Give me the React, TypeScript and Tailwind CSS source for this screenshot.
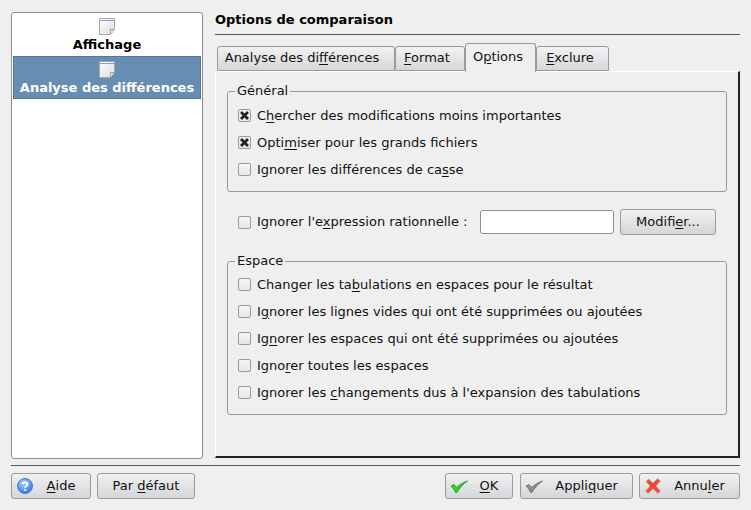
import React from "react";

// one underlined mnemonic letter, as in the KDE labels
const Label = ({ before, mn, after }: { before?: string; mn: string; after?: string }) => (
  <span className="whitespace-pre">
    {before}
    <u className="underline underline-offset-2">{mn}</u>
    {after}
  </span>
);

const PageIcon = () => (
  <svg width="16" height="17" viewBox="0 0 16 17" className="block">
    <defs>
      <linearGradient id="pg" x1="0" y1="0" x2="1" y2="1">
        <stop offset="0" stopColor="#ffffff" />
        <stop offset="1" stopColor="#dcdcdc" />
      </linearGradient>
    </defs>
    <path d="M0.5 0.5H15.5V11.5L11.5 16.5H0.5Z" fill="url(#pg)" stroke="#a8a8a8" />
    <path d="M1 2.5H15" stroke="#7f9df0" />
    <path d="M15 11.5H11.5V16" fill="#e8e8e8" stroke="#a0a0a0" />
  </svg>
);

const Check = ({ checked }: { checked?: boolean }) => (
  <span className="flex h-[13px] w-[13px] shrink-0 items-center justify-center rounded-[2px] border border-[#9a9a9a] bg-gradient-to-b from-[#f6f6f6] to-[#e6e6e6]">
    {checked && (
      <svg width="11" height="11" viewBox="0 0 11 11">
        <path d="M2 2L9 9M9 2L2 9" stroke="#222" strokeWidth="2.8" />
      </svg>
    )}
  </span>
);

const Row = ({ checked, children }: { checked?: boolean; children: React.ReactNode }) => (
  <div className="flex h-[27px] items-center gap-[6px]">
    <Check checked={checked} />
    {children}
  </div>
);

const Tab = ({ active, w, pad, children }: { active?: boolean; w: string; pad?: string; children: React.ReactNode }) =>
  active ? (
    <div className={`${w} ${pad} relative z-10 -mb-px flex h-[29px] items-start justify-center rounded-t-[3px] border border-b-0 border-[#9a9a9a] bg-[#efefef] pt-[5px]`}>
      {children}
    </div>
  ) : (
    <div className={`${w} ${pad} flex h-[25px] items-center justify-center rounded-t-[3px] border border-[#9a9a9a] bg-gradient-to-b from-[#f2f2f2] to-[#d6d7da] pb-[2px]`}>
      {children}
    </div>
  );

const Btn = ({ w, icon, children }: { w: string; icon?: React.ReactNode; children: React.ReactNode }) => (
  <button className={`${w} relative flex h-[26px] items-center justify-center rounded-[3px] border border-[#9a9a9a] bg-gradient-to-b from-[#f1f1f1] to-[#d5d6da] text-[13px] text-[#111]`}>
    {icon && <span className="absolute left-[4px] top-[3px]">{icon}</span>}
    {children}
  </button>
);

const HelpIcon = () => (
  <svg width="18" height="18" viewBox="0 0 18 18" className="block">
    <defs>
      <radialGradient id="hb" cx="0.4" cy="0.3" r="0.8">
        <stop offset="0" stopColor="#a9cdfb" />
        <stop offset="1" stopColor="#2b6fe0" />
      </radialGradient>
    </defs>
    <circle cx="9" cy="9" r="7.5" fill="url(#hb)" stroke="#3f77cf" />
    <path d="M6.5 7C6.5 4.8 11.5 4.8 11.5 7.2C11.5 9 9 8.8 9 10.8" fill="none" stroke="#fff" strokeWidth="1.8" />
    <circle cx="9" cy="13" r="1.1" fill="#fff" />
  </svg>
);

const TickIcon = ({ fill, stroke }: { fill: string; stroke: string }) => (
  <svg width="18" height="18" viewBox="0 0 18 18" className="block">
    <path d="M1 9L4 7.5L6.5 10.5C9 8 13 5.5 17.5 4C13 7 9.5 11 7 15.5H5.5C4.5 13 3 11 1 9Z" fill={fill} stroke={stroke} strokeWidth="0.8" />
  </svg>
);

const CrossIcon = () => (
  <svg width="18" height="18" viewBox="0 0 18 18" className="block">
    <path d="M2 4.5L4.5 2L9 6L13.5 1.5L16.5 4L12 9L16.5 14L14 16.5L9 12L4 16.5L1.5 14L6 9Z" fill="#ee4a35" stroke="#d9a59c" strokeWidth="0.8" />
  </svg>
);

export default function App() {
  return (
    <div className="flex h-[510px] w-[751px] flex-col overflow-hidden bg-[#efefef] px-[11px] pt-[12px] text-[13px] leading-[16px] text-[#111] [font-family:'DejaVu_Sans',sans-serif]">
      <div className="flex h-[447px] gap-[12px]">
        {/* left list */}
        <div className="h-full w-[192px] shrink-0 rounded-[3px] border border-[#8f8f8f] bg-white p-px">
          <div className="flex h-[42px] flex-col items-center pt-[4px]">
            <PageIcon />
            <span className="mt-[2px] font-bold text-black">Affichage</span>
          </div>
          <div className="flex h-[43px] flex-col items-center border border-dotted border-[#4a5f75] bg-[#678db2] pt-[4px]">
            <PageIcon />
            <span className="mt-[2px] font-bold text-white">Analyse des différences</span>
          </div>
        </div>

        {/* right side */}
        <div className="flex min-w-0 flex-1 flex-col">
          <div className="h-[23px] border-b border-[#555] pt-[1px] font-bold leading-[14px] text-black">
            Options de comparaison
          </div>

          <div className="mt-[8px] flex items-end pl-[2px]">
            <Tab w="w-[178px]" pad="pr-[8px]">
              <Label before="Analyse des di" mn="f" after="férences" />
            </Tab>
            <Tab w="w-[70px]" pad="pr-[6px]">
              <Label mn="F" after="ormat" />
            </Tab>
            <Tab active w="w-[71px]" pad="pr-[5px]">
              <Label before="O" mn="p" after="tions" />
            </Tab>
            <Tab w="w-[73px]" pad="pr-[5px]">
              <Label mn="E" after="xclure" />
            </Tab>
          </div>

          <div className="flex h-[387px] flex-col border-l border-t border-r-2 border-b-2 border-l-white border-t-white border-r-[#222] border-b-[#222] bg-[#efefef] pl-[11px] pr-[11px]">
            <fieldset className="mt-[11px] h-[109px] rounded-[3px] border border-[#9a9a9a]">
              <legend className="ml-[7px] px-[2px]">Général</legend>
              <div className="pl-[10px] pt-[3px]">
                <Row checked>
                  <Label before="C" mn="h" after="ercher des modifications moins importantes" />
                </Row>
                <Row checked>
                  <Label before="Opti" mn="m" after="iser pour les grands fichiers" />
                </Row>
                <Row>
                  <Label before="Ignorer les différences de ca" mn="s" after="se" />
                </Row>
              </div>
            </fieldset>

            <div className="mt-[17px] flex h-[26px] items-center pl-[11px]">
              <Check />
              <span className="ml-[6px] w-[223px]">
                <Label before="Ignorer l'e" mn="x" after="pression rationnelle :" />
              </span>
              <div className="h-[24px] w-[134px] rounded-[3px] border border-[#8f8f8f] bg-white" />
              <div className="ml-[6px]">
                <Btn w="w-[96px]">
                  <Label before="Modifi" mn="e" after="r..." />
                </Btn>
              </div>
            </div>

            <fieldset className="mt-[18px] h-[162px] rounded-[3px] border border-[#9a9a9a]">
              <legend className="ml-[7px] px-[2px]">Espace</legend>
              <div className="pl-[10px] pt-[2px]">
                <Row>
                  <Label before="Changer les ta" mn="b" after="ulations en espaces pour le résultat" />
                </Row>
                <Row>
                  <Label before="I" mn="g" after="norer les lignes vides qui ont été supprimées ou ajoutées" />
                </Row>
                <Row>
                  <Label before="Ig" mn="n" after="orer les espaces qui ont été supprimées ou ajoutées" />
                </Row>
                <Row>
                  <Label before="Igno" mn="r" after="er toutes les espaces" />
                </Row>
                <Row>
                  <Label before="Ignorer les " mn="c" after="hangements dus à l'expansion des tabulations" />
                </Row>
              </div>
            </fieldset>
          </div>
        </div>
      </div>

      <div className="mt-[6px] border-t border-[#555]" />

      {/* bottom buttons */}
      <div className="mt-[7px] flex items-center">
        <Btn w="w-[80px]" icon={<HelpIcon />}>
          <span className="pl-[20px]">
            <Label mn="A" after="ide" />
          </span>
        </Btn>
        <div className="ml-[6px]">
          <Btn w="w-[98px]">
            <Label before="Par " mn="d" after="éfaut" />
          </Btn>
        </div>
        <div className="ml-auto flex items-center gap-[6px]">
          <div className="mr-px">
            <Btn w="w-[68px]" icon={<TickIcon fill="#2fd02f" stroke="#1f8f2f" />}>
              <span className="pl-[20px]">
                <Label mn="O" after="K" />
              </span>
            </Btn>
          </div>
          <Btn w="w-[113px]" icon={<TickIcon fill="#8b8b8b" stroke="#6a6a6a" />}>
            <span className="pl-[20px]">
              <Label before="Appli" mn="q" after="uer" />
            </span>
          </Btn>
          <Btn w="w-[101px]" icon={<CrossIcon />}>
            <span className="pl-[20px]">
              <Label before="Annu" mn="l" after="er" />
            </span>
          </Btn>
        </div>
      </div>
    </div>
  );
}
